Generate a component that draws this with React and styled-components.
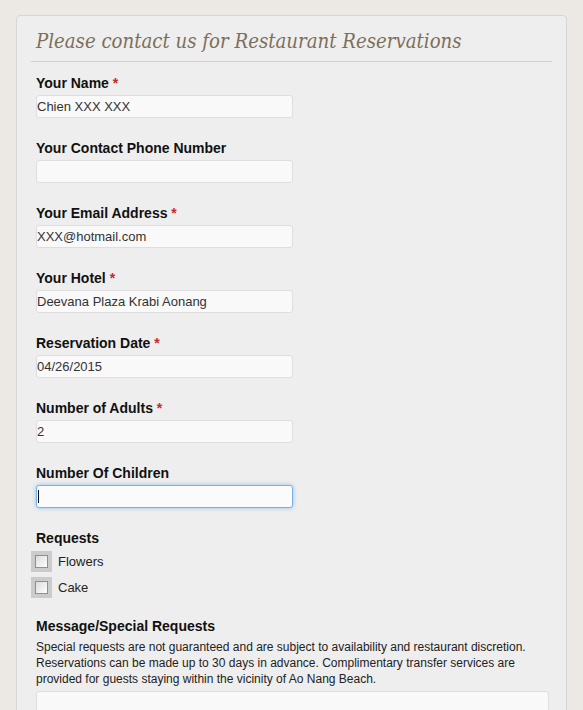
import React from 'react'
import styled, { createGlobalStyle, css } from 'styled-components'

const GlobalStyle = createGlobalStyle`
  html, body {
    margin: 0;
    padding: 0;
    background: #ece9e4;
    font-family: "Liberation Sans", Arial, sans-serif;
  }
`

const Page = styled.div`
  padding: 15px 16px 0 16px;
  height: 710px;
  box-sizing: border-box;
  overflow: hidden;
`

const Panel = styled.div`
  width: 551px;
  box-sizing: border-box;
  background: #eeeeee;
  border: 1px solid #d6d6d6;
  border-radius: 4px;
  padding: 11px 14px 40px 14px;
`

const Header = styled.div`
  border-bottom: 1px solid #cfcfcf;
  padding: 0 5px 5px 5px;
  margin-bottom: 12px;
`

const Title = styled.h1`
  margin: 0;
  font-family: "DejaVu Serif Condensed", "DejaVu Serif", "Liberation Serif", serif;
  font-stretch: condensed;
  font-style: italic;
  font-weight: normal;
  font-size: 20.2px;
  line-height: 29px;
  color: #7d6e5a;
`

const Body = styled.div`
  padding: 0 5px;
`

const Field = styled.div`
  margin-bottom: 21px;
`

const Label = styled.label`
  display: block;
  font-weight: bold;
  font-size: 14px;
  line-height: 18px;
  color: #111;
  margin-bottom: ${p => p.$gap || 3}px;
`

const Req = styled.span`
  color: #c8282a;
`

const InputWrap = styled.div`
  position: relative;
  width: 257px;
  ${p => p.$focused && css`
    &::after {
      content: '';
      position: absolute;
      left: 2px;
      top: 5px;
      width: 1px;
      height: 13px;
      background: #111;
    }
  `}
`

const Input = styled.input`
  display: block;
  width: 257px;
  height: 23px;
  box-sizing: border-box;
  margin: 0;
  padding: 0;
  font-family: "Liberation Sans", Arial, sans-serif;
  font-size: 13px;
  color: #333;
  background: #f9f9f9;
  border: 1px solid #dedede;
  border-radius: 3px;
  outline: none;
  caret-color: transparent;
  ${p => p.$focused && css`
    border-color: #74b3ec;
    box-shadow: 0 0 4px rgba(110, 175, 240, 0.7);
    background: #fbfbfb;
  `}
`

const CheckRow = styled.label`
  display: flex;
  align-items: center;
  height: 21px;
  margin-left: -5px;
  margin-bottom: 5px;
  font-size: 13px;
  color: #222;
`

const BoxWrap = styled.span`
  width: 21px;
  height: 21px;
  background: #cbcbcb;
  display: flex;
  align-items: center;
  justify-content: center;
  margin-right: 6px;
`

const Box = styled.span`
  width: 11px;
  height: 11px;
  border: 1px solid #8e8f8f;
  background: linear-gradient(135deg, #dcdcdc 0%, #f4f4f4 70%, #ffffff 100%);
`

const Help = styled.p`
  margin: 0 0 4px 0;
  font-size: 12px;
  line-height: 16px;
  color: #222;
`

const TextArea = styled.textarea`
  display: block;
  width: 513px;
  height: 90px;
  box-sizing: border-box;
  background: #f9f9f9;
  border: 1px solid #dedede;
  border-radius: 3px;
  resize: none;
  outline: none;
`

const fields = [
  { label: 'Your Name', req: true, value: 'Chien XXX XXX' },
  { label: 'Your Contact Phone Number', req: false, value: '' },
  { label: 'Your Email Address', req: true, value: 'XXX@hotmail.com' },
  { label: 'Your Hotel', req: true, value: 'Deevana Plaza Krabi Aonang' },
  { label: 'Reservation Date', req: true, value: '04/26/2015' },
  { label: 'Number of Adults', req: true, value: '2' },
  { label: 'Number Of Children', req: false, value: '', focused: true },
]

const App = () => {
  return (
    <Page>
      <GlobalStyle />
      <Panel>
        <Header>
          <Title>Please contact us for Restaurant Reservations</Title>
        </Header>
        <Body>
          {fields.map(f => (
            <Field key={f.label}>
              <Label>
                {f.label}
                {f.req && <Req> *</Req>}
              </Label>
              <InputWrap $focused={f.focused}>
                <Input type="text" defaultValue={f.value} $focused={f.focused} />
              </InputWrap>
            </Field>
          ))}
          <Field style={{ marginBottom: 19 }}>
            <Label $gap={4}>Requests</Label>
            <CheckRow>
              <BoxWrap><Box /></BoxWrap>
              Flowers
            </CheckRow>
            <CheckRow style={{ marginBottom: 0 }}>
              <BoxWrap><Box /></BoxWrap>
              Cake
            </CheckRow>
          </Field>
          <Field>
            <Label $gap={4}>Message/Special Requests</Label>
            <Help>
              Special requests are not guaranteed and are subject to availability and restaurant discretion.
              Reservations can be made up to 30 days in advance. Complimentary transfer services are
              provided for guests staying within the vicinity of Ao Nang Beach.
            </Help>
            <TextArea />
          </Field>
        </Body>
      </Panel>
    </Page>
  )
}

export default App
